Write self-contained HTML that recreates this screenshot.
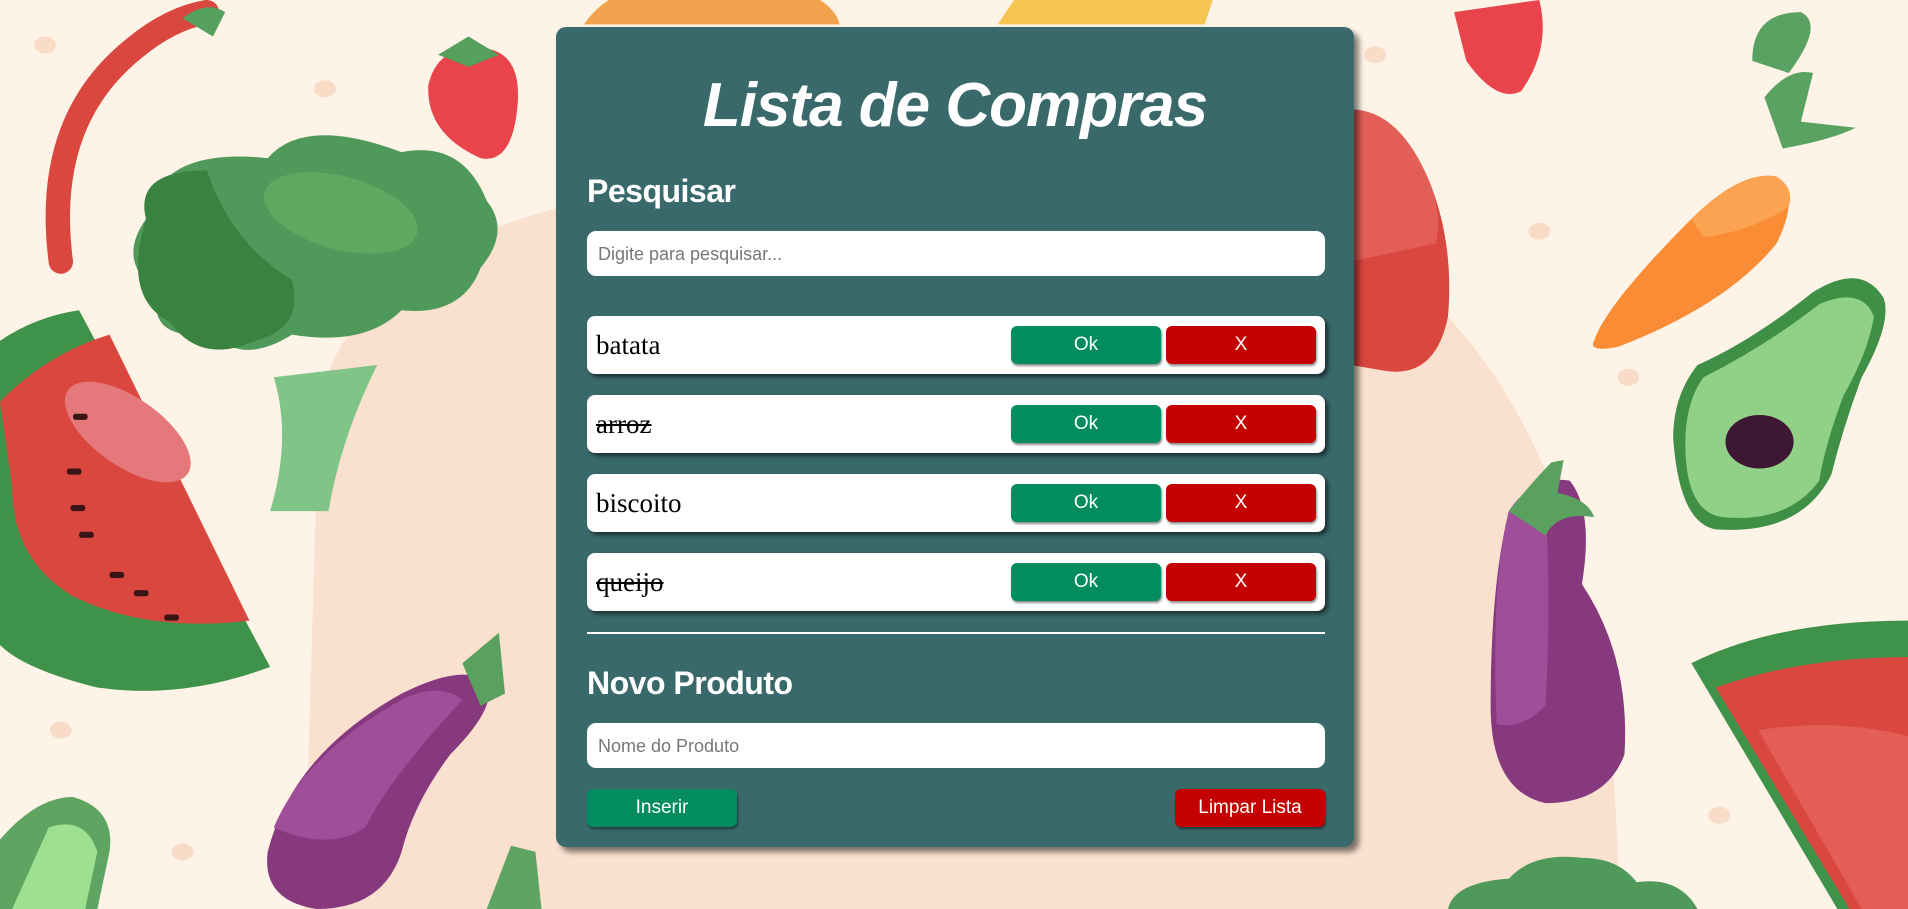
<!DOCTYPE html>
<html><head><meta charset="utf-8">
<style>
*{box-sizing:border-box;margin:0;padding:0}
html,body{width:1908px;height:909px;overflow:hidden;background:#fdf3e7;font-family:"Liberation Sans",Arial,sans-serif}
#bg{position:absolute;left:0;top:0;width:1908px;height:909px}
.card{position:absolute;left:556px;top:27px;width:798px;height:820px;background:#3a696b;border-radius:10px;box-shadow:5px 5px 6px rgba(0,0,0,.5)}
h1{position:absolute;left:0;width:100%;top:43px;text-align:center;color:#fff;font:italic bold 62px "Liberation Sans",sans-serif;letter-spacing:-1px}
h2{position:absolute;left:31px;color:#fff;font:bold 32px "Liberation Sans",sans-serif;letter-spacing:-0.5px}
.inp{position:absolute;left:31px;width:738px;height:45px;background:#fff;border-radius:9px;color:#777;font-size:18px;padding:13px 11px}
.item{position:absolute;left:31px;width:738px;height:58px;background:#fff;border-radius:8px;box-shadow:3px 3px 4px rgba(0,0,0,.55)}
.item span{position:absolute;left:9px;top:14px;font:27px "Liberation Serif",serif;color:#000}
.item span.done{text-decoration:line-through}
.btn{position:absolute;height:38px;border-radius:6px;color:#fff;font-size:19px;text-align:center;line-height:38px;box-shadow:1px 2px 2px rgba(0,0,0,.45)}
.g{background:#038c5f}.r{background:#c40000}
.item .g{left:424px;top:10px;width:150px}
.item .r{left:579px;top:10px;width:150px}
hr{position:absolute;left:31px;top:605px;width:738px;border:0;border-top:2px solid #fff}
</style></head><body>
<svg id="bg" viewBox="0 0 1568 747" preserveAspectRatio="none">
<path d="M250 747 L262 330 Q300 170 620 145 Q1000 120 1180 250 Q1330 400 1330 747 Z" fill="#fae0cf"/>
<g fill="#f9dcc8"><ellipse cx="37" cy="37" rx="9" ry="7"/><ellipse cx="267" cy="73" rx="9" ry="7"/><ellipse cx="50" cy="600" rx="9" ry="7"/><ellipse cx="150" cy="700" rx="9" ry="7"/><ellipse cx="1130" cy="45" rx="9" ry="7"/><ellipse cx="1265" cy="190" rx="9" ry="7"/><ellipse cx="1338" cy="310" rx="9" ry="7"/><ellipse cx="1413" cy="670" rx="9" ry="7"/></g>
<path d="M480 20 Q500 -10 540 -10 L650 -10 Q685 0 690 20 Z" fill="#f2a24c"/>
<path d="M820 20 L840 -10 L1000 -10 L990 20 Z" fill="#f6c452"/>
<path d="M50 215 Q35 100 110 40 Q140 15 170 10" stroke="#d9473e" stroke-width="20" fill="none" stroke-linecap="round"/>
<path d="M150 15 Q170 0 185 10 L175 30 Z" fill="#54a05c"/>
<path d="M352 70 Q360 35 400 40 Q430 45 425 90 Q420 135 395 130 Q350 110 352 70 Z" fill="#e9434b"/>
<path d="M360 45 L385 30 L410 45 L385 55 Z" fill="#54a05c"/>
<path d="M225 310 Q240 360 222 420 L270 420 Q280 360 310 300 Z" fill="#80c488"/>
<path d="M120 180 Q130 120 220 130 Q250 95 330 125 Q380 115 400 165 Q420 190 395 220 Q380 260 330 255 Q300 285 240 275 Q200 300 175 275 Q120 280 130 240 Q95 215 120 180 Z" fill="#4f9a5b"/>
<path d="M120 180 Q110 140 170 140 Q190 200 240 230 Q250 270 210 280 Q165 300 140 265 Q100 245 120 180 Z" fill="#3a823f"/>
<ellipse cx="280" cy="175" rx="65" ry="30" fill="#5fa862" transform="rotate(15 280 175)"/>
<path d="M0 280 Q30 260 65 255 L222 548 Q150 575 80 565 Q20 550 0 530 Z" fill="#3f9249"/>
<path d="M0 330 Q40 290 90 275 L205 510 Q120 520 60 490 Q10 460 10 400 Z" fill="#d9473e"/>
<ellipse cx="105" cy="355" rx="60" ry="28" fill="#e4787a" transform="rotate(35 105 355)"/>
<g fill="#3a1515"><rect x="60" y="340" width="12" height="5" rx="2"/><rect x="55" y="385" width="12" height="5" rx="2"/><rect x="58" y="415" width="12" height="5" rx="2"/><rect x="65" y="437" width="12" height="5" rx="2"/><rect x="90" y="470" width="12" height="5" rx="2"/><rect x="110" y="485" width="12" height="5" rx="2"/><rect x="135" y="505" width="12" height="5" rx="2"/></g>
<path d="M220 700 Q240 620 330 570 Q380 545 400 560 Q410 580 370 620 Q340 660 330 700 Q315 747 260 747 Q215 740 220 700 Z" fill="#87397e"/>
<path d="M225 680 Q250 620 330 575 Q360 560 380 575 Q320 640 300 680 Q270 700 225 680 Z" fill="#a04e9a"/>
<path d="M380 545 L410 520 L415 570 L395 580 Z" fill="#5aa160"/>
<path d="M0 747 L0 690 Q30 655 60 655 Q95 665 90 700 L80 747 Z" fill="#5da561"/>
<path d="M10 747 L40 680 Q70 670 80 700 L70 747 Z" fill="#9de08f"/>
<path d="M400 747 L420 695 L440 700 L445 747 Z" fill="#5da561"/>
<path d="M1110 90 Q1150 90 1175 150 Q1195 200 1190 260 Q1180 310 1140 305 L1110 300 Z" fill="#d9473e"/>
<path d="M1110 90 Q1150 90 1175 150 Q1185 175 1180 200 L1110 215 Z" fill="#e45e58"/>
<path d="M1195 10 L1265 0 Q1275 40 1250 75 Q1230 85 1205 50 Z" fill="#e9434b"/>
<path d="M1310 280 Q1320 250 1390 180 Q1430 140 1460 145 Q1480 160 1460 200 Q1420 250 1330 285 Q1305 290 1310 280 Z" fill="#f98c35"/>
<path d="M1390 180 Q1430 140 1460 145 Q1475 155 1470 170 Q1440 190 1400 195 Z" fill="#fca352"/>
<path d="M1450 80 Q1470 55 1490 60 L1480 100 L1525 105 Q1505 115 1465 122 Z" fill="#59a262"/>
<path d="M1440 50 Q1440 10 1480 10 Q1500 20 1470 60 Z" fill="#59a262"/>
<path d="M1395 300 Q1440 280 1490 240 Q1530 215 1548 245 Q1555 265 1530 310 Q1515 350 1505 390 Q1480 440 1410 435 Q1380 430 1375 360 Q1375 325 1395 300 Z" fill="#3f8f46"/>
<path d="M1400 310 Q1450 285 1495 250 Q1530 235 1540 260 Q1535 290 1515 325 Q1500 365 1495 395 Q1470 430 1415 425 Q1385 420 1385 365 Q1385 330 1400 310 Z" fill="#90d087"/>
<ellipse cx="1446" cy="363" rx="28" ry="22" fill="#3e1732"/>
<path d="M1240 420 Q1260 390 1290 395 Q1310 420 1300 480 Q1340 540 1335 620 Q1320 660 1270 660 Q1225 650 1225 580 Q1225 480 1240 420 Z" fill="#87397e"/>
<path d="M1240 420 Q1255 400 1270 410 Q1275 500 1270 580 Q1250 600 1230 595 Q1225 480 1240 420 Z" fill="#a04e9a"/>
<path d="M1240 420 Q1260 395 1275 380 L1285 378 L1280 405 Q1305 410 1310 425 Q1280 420 1270 440 Z" fill="#5aa160"/>
<path d="M1390 545 Q1460 510 1568 510 L1568 747 L1510 747 Z" fill="#3f9249"/>
<path d="M1410 565 Q1480 540 1568 540 L1568 747 L1520 747 Z" fill="#d9473e"/>
<path d="M1445 600 Q1510 590 1568 605 L1568 747 L1530 747 Z" fill="#e45e58"/>
<path d="M1190 747 Q1195 725 1240 722 Q1260 700 1300 705 Q1330 705 1345 725 Q1380 720 1395 747 Z" fill="#4f9a5b"/>
</svg>
<div class="card">
<h1>Lista de Compras</h1>
<h2 style="top:146px">Pesquisar</h2>
<div class="inp" style="top:204px">Digite para pesquisar...</div>
<div class="item" style="top:289px"><span>batata</span><div class="btn g">Ok</div><div class="btn r">X</div></div>
<div class="item" style="top:368px"><span class="done">arroz</span><div class="btn g">Ok</div><div class="btn r">X</div></div>
<div class="item" style="top:447px"><span>biscoito</span><div class="btn g">Ok</div><div class="btn r">X</div></div>
<div class="item" style="top:526px"><span class="done">queijo</span><div class="btn g">Ok</div><div class="btn r">X</div></div>
<hr>
<h2 style="top:638px">Novo Produto</h2>
<div class="inp" style="top:696px">Nome do Produto</div>
<div class="btn g" style="left:31px;top:762px;width:150px">Inserir</div>
<div class="btn r" style="left:619px;top:762px;width:150px">Limpar Lista</div>
</div>
</body></html>
